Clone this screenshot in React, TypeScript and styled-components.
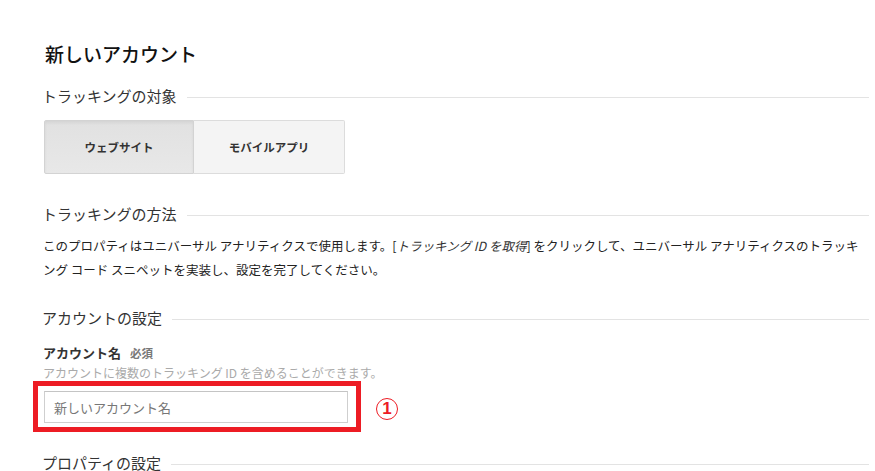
import styled, { createGlobalStyle } from "styled-components";

const GlobalStyle = createGlobalStyle`
  html, body {
    margin: 0;
    padding: 0;
    background: #fff;
  }
  body {
    font-family: "Noto Sans CJK JP", "Liberation Sans", sans-serif;
    color: #333;
  }
`;

const SECTIONS = {
  target: "トラッキングの対象",
  method: "トラッキングの方法",
  account: "アカウントの設定",
  property: "プロパティの設定",
};

function SectionHeader({ label, gap }: { label: string; gap: number }) {
  return (
    <Header $gap={gap}>
      <HeaderText>{label}</HeaderText>
      <HeaderRule />
    </Header>
  );
}

export default function App() {
  return (
    <>
      <GlobalStyle />
      <Page>
        <Title>新しいアカウント</Title>

        <SectionHeader label={SECTIONS.target} gap={20} />
        <Segmented>
          <Segment $active>ウェブサイト</Segment>
          <Segment>モバイルアプリ</Segment>
        </Segmented>

        <SectionHeader label={SECTIONS.method} gap={30} />
        <Description>
          このプロパティはユニバーサル アナリティクスで使用します。[
          <em>トラッキング ID を取得</em>] をクリックして、ユニバーサル
          アナリティクスのトラッキング コード スニペットを実装し、設定を完了してください。
        </Description>

        <SectionHeader label={SECTIONS.account} gap={26} />
        <FieldLabel>
          アカウント名<Required>必須</Required>
        </FieldLabel>
        <FieldHelp>
          アカウントに複数のトラッキング ID を含めることができます。
        </FieldHelp>
        <FieldRow>
          <Highlight>
            <TextInput placeholder="新しいアカウント名" />
          </Highlight>
          <Marker>1</Marker>
        </FieldRow>

        <SectionHeader label={SECTIONS.property} gap={21} />
      </Page>
    </>
  );
}

const Page = styled.div`
  padding: 42px 6px 0 42px;
  display: flex;
  flex-direction: column;
  align-items: stretch;
`;

const Title = styled.h1`
  margin: 0 0 0 3px;
  font-size: 19px;
  line-height: 24px;
  font-weight: 500;
  color: #111;
`;

const Header = styled.div<{ $gap: number }>`
  display: flex;
  align-items: center;
  margin-top: ${(p) => p.$gap}px;
  height: 20px;
`;

const HeaderText = styled.span`
  font-size: 15px;
  line-height: 20px;
  color: #333;
  white-space: nowrap;
`;

const HeaderRule = styled.div`
  flex: 1;
  height: 1px;
  margin: 3px 0 0 10px;
  background: #e3e3e3;
`;

const Segmented = styled.div`
  display: flex;
  margin: 14px 0 0 2px;
  width: 301px;
  height: 54px;
`;

const Segment = styled.button<{ $active?: boolean }>`
  flex: 1;
  height: 54px;
  margin: 0;
  padding: 0;
  font-family: inherit;
  font-size: 11.5px;
  font-weight: 700;
  color: #333;
  border: 1px solid ${(p) => (p.$active ? "#d3d3d3" : "#dcdcdc")};
  border-left-width: ${(p) => (p.$active ? "1px" : "0")};
  border-radius: ${(p) => (p.$active ? "2px 0 0 2px" : "0 2px 2px 0")};
  background: ${(p) =>
    p.$active ? "linear-gradient(#e1e1e1, #e8e8e8)" : "#f4f4f4"};
  box-shadow: ${(p) =>
    p.$active ? "inset 0 2px 3px rgba(0,0,0,0.06)" : "none"};
  &:first-child {
    flex: 0 0 150px;
  }
`;

const Description = styled.p`
  margin: 10px 0 0 1px;
  font-size: 12.5px;
  line-height: 24px;
  color: #222;
  em {
    font-style: italic;
    color: #333;
  }
`;

const FieldLabel = styled.div`
  margin: 15px 0 0 1px;
  font-size: 13px;
  line-height: 20px;
  font-weight: 700;
  color: #333;
`;

const Required = styled.span`
  margin-left: 9px;
  font-size: 11.5px;
  font-weight: 700;
  color: #777;
`;

const FieldHelp = styled.div`
  margin: 2px 0 0 1px;
  font-size: 12px;
  line-height: 16px;
  color: #aaa;
`;

const FieldRow = styled.div`
  display: flex;
  align-items: center;
  margin-left: -9px;
`;

const Highlight = styled.div`
  width: 328px;
  height: 51px;
  box-sizing: border-box;
  border: 5px solid #ed1c24;
  padding: 5px 0 0 6px;
`;

const TextInput = styled.input`
  width: 304px;
  height: 32px;
  box-sizing: border-box;
  border: 1px solid #cfcfcf;
  border-top-color: #c4c4c4;
  padding: 0 9px;
  font-family: inherit;
  font-size: 13px;
  color: #333;
  outline: none;
  &::placeholder {
    color: #777;
  }
`;

const Marker = styled.span`
  display: inline-flex;
  align-items: center;
  justify-content: center;
  margin: 4px 0 0 15px;
  width: 22px;
  height: 22px;
  box-sizing: border-box;
  border: 1.5px solid #ed1c24;
  border-radius: 50%;
  color: #ed1c24;
  font-family: "Liberation Sans", sans-serif;
  font-weight: 700;
  font-size: 17px;
  line-height: 1;
`;
